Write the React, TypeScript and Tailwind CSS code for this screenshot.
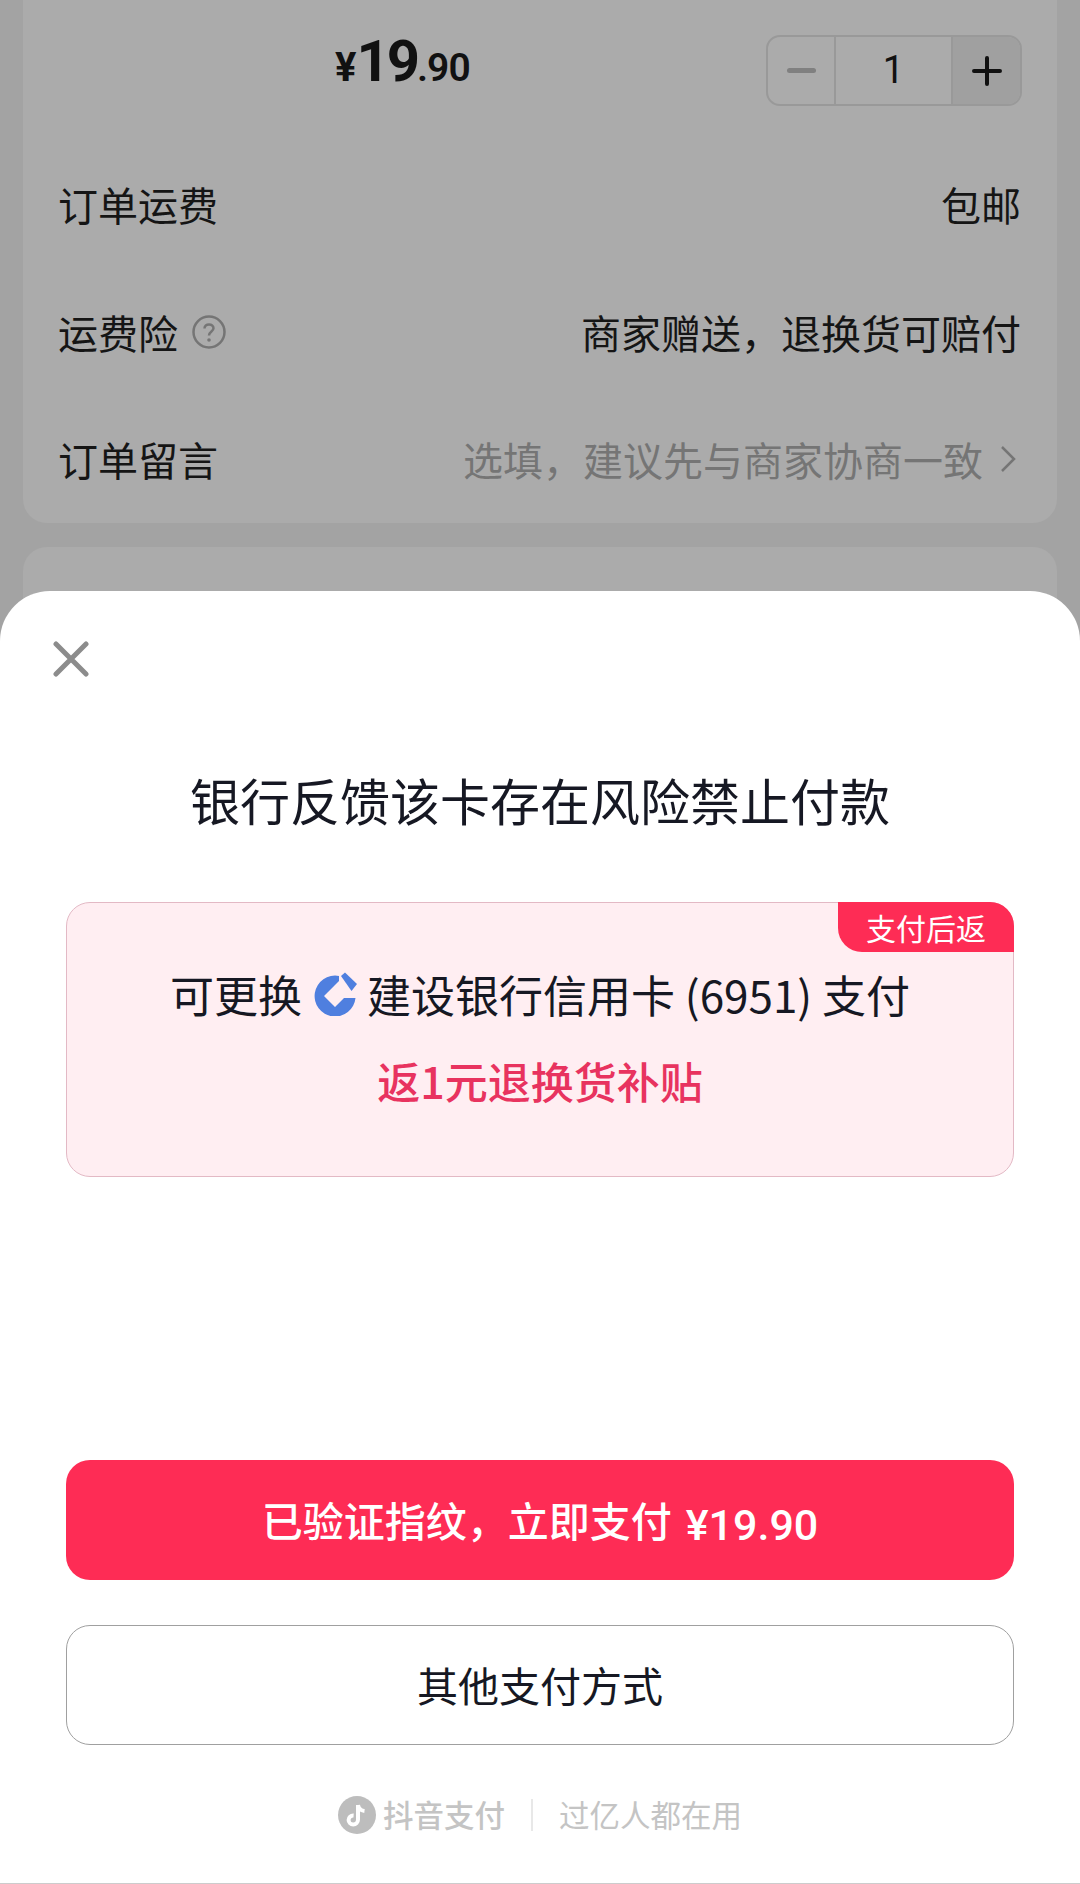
const cjk = "font-['Noto_Sans_CJK_SC','Noto_Sans',sans-serif]";

function CcbLogo() {
  return (
    <svg width="44" height="44" viewBox="0 0 44 44" className="ml-[12px] mr-[9px] shrink-0">
      <path
        d="M25 3.9 A20.5 20.5 0 1 0 41.5 26 H30 L21 35 L10 24 L21 13 L25 9 Z"
        fill="#4f7fdf"
      />
      <path d="M27 4 L31 0.5 L43 12 L37.5 19 Z" fill="#4f7fdf" />
    </svg>
  );
}

function DouyinLogo() {
  return (
    <svg width="38" height="38" viewBox="0 0 38 38" className="shrink-0">
      <circle cx="19" cy="19" r="19" fill="#bdbdbd" />
      <path
        d="M20 9 L20 23.5 C20 26.5 17.8 28.5 15.2 28.5 C12.6 28.5 10.6 26.4 10.6 24 C10.6 21.4 12.8 19.4 15.6 19.6 M20 9 C20.6 12.4 23 14.6 26.5 15"
        fill="none"
        stroke="#fff"
        strokeWidth="4"
      />
    </svg>
  );
}

export default function App() {
  return (
    <div className={`relative h-[1884px] w-[1080px] overflow-hidden bg-[#a3a3a3] ${cjk}`}>
      {/* page behind the sheet */}
      <div className="mx-[23px] h-[523px] rounded-b-[24px] bg-[#ababab] px-[36px]">
        <div className="flex h-[140px] items-start justify-between pt-[33px]">
          <div className="ml-[276px] flex items-baseline font-['Roboto',sans-serif] font-semibold text-[#111]">
            <span className="text-[40px] leading-[56px] font-bold">¥</span>
            <span className="text-[58px] leading-[56px] font-bold tracking-[-3px]">19</span>
            <span className="text-[39px] leading-[56px] tracking-[-1px]">.90</span>
          </div>
          <div className="-mr-[1px] mt-[2px] flex h-[71px] w-[256px] overflow-hidden rounded-[14px] border-2 border-[#999]">
            <div className="flex w-[68px] items-center justify-center border-r-2 border-[#999]">
              <div className="h-[5px] w-[29px] rounded-full bg-[#808080]" />
            </div>
            <div className="flex flex-1 items-center justify-center font-['Roboto',sans-serif] text-[38px] text-[#111]">1</div>
            <div className="flex w-[69px] items-center justify-center border-l-2 border-[#999] bg-[#a0a0a0]">
              <svg width="30" height="30" viewBox="0 0 30 30">
                <path d="M15 2V28M2 15H28" stroke="#111" strokeWidth="4" strokeLinecap="round" />
              </svg>
            </div>
          </div>
        </div>
        <div className="flex h-[128px] items-center justify-between text-[40px] text-[#151515]">
          <span className="-ml-[1px]">订单运费</span>
          <span>包邮</span>
        </div>
        <div className="flex h-[127px] items-center justify-between text-[40px] text-[#151515]">
          <span className="-ml-[1px] flex items-center gap-[14px]">
            运费险
            <svg width="34" height="34" viewBox="0 0 34 34">
              <circle cx="17" cy="17" r="15.5" fill="none" stroke="#757575" strokeWidth="2.5" />
              <path d="M12.5 13.5C12.5 11 14.5 9.5 17 9.5C19.5 9.5 21.5 11 21.5 13.3C21.5 16.5 17 16.5 17 20.5" fill="none" stroke="#757575" strokeWidth="2.5" />
              <circle cx="17" cy="25" r="1.8" fill="#757575" />
            </svg>
          </span>
          <span>商家赠送，退换货可赔付</span>
        </div>
        <div className="flex h-[127px] items-center justify-between text-[40px] text-[#151515]">
          <span className="-ml-[1px]">订单留言</span>
          <span className="flex items-center gap-[16px] pr-[4px] text-[#757575]">
            选填，建议先与商家协商一致
            <svg width="18" height="30" viewBox="0 0 18 30">
              <path d="M3 3L15 15L3 27" fill="none" stroke="#757575" strokeWidth="2.5" />
            </svg>
          </span>
        </div>
      </div>
      <div className="mx-[23px] mt-[24px] h-[80px] rounded-t-[24px] bg-[#ababab]" />

      {/* bottom sheet */}
      <div className="absolute inset-x-0 top-[591px] bottom-0 flex flex-col rounded-t-[50px] border-b border-[#ccc] bg-white px-[66px]">
        <div className="-ml-[13px] mt-[50px] h-[36px]">
          <svg width="36" height="36" viewBox="0 0 36 36">
            <path d="M3 3L33 33M33 3L3 33" stroke="#8c8c8c" strokeWidth="5" strokeLinecap="round" />
          </svg>
        </div>
        <h1 className="mt-[86px] text-center text-[50px] leading-[72px] font-normal text-[#161823]">银行反馈该卡存在风险禁止付款</h1>

        <div className="relative mt-[67px] flex h-[275px] flex-col items-center rounded-[24px] border border-[#e3b9c5] bg-[#ffeef2]">
          <div className="absolute -top-px -right-px flex h-[50px] w-[176px] items-center justify-center rounded-tr-[24px] rounded-bl-[24px] bg-[#fe2c55] text-[30px] text-white">
            支付后返
          </div>
          <div className="mt-[61px] flex h-[60px] items-center text-[44px] text-[#161823]">
            可更换
            <CcbLogo />
            建设银行信用卡 (6951) 支付
          </div>
          <div className="mt-[26px] text-[43px] leading-[60px] font-medium text-[#e8335f]">返1元退换货补贴</div>
        </div>

        <button className="mt-[283px] flex h-[120px] items-center justify-center gap-[14px] rounded-[24px] bg-[#fe2c55] text-[41px] font-medium text-white">
          <span>已验证指纹，立即支付</span>
          <span className="mt-[10px] font-['Roboto',sans-serif] text-[43px] font-medium">¥19.90</span>
        </button>
        <button className="mt-[45px] h-[120px] rounded-[24px] border border-[#a0a0a0] bg-white text-[41px] text-[#161823]">
          其他支付方式
        </button>

        <div className="mt-[47px] flex items-center justify-center text-[30.5px] text-[#c4c4c4]">
          <DouyinLogo />
          <span className="ml-[7px] font-medium">抖音支付</span>
          <div className="mx-[26px] h-[32px] w-[2px] bg-[#e8e8e8]" />
          <span>过亿人都在用</span>
        </div>
      </div>
    </div>
  );
}
